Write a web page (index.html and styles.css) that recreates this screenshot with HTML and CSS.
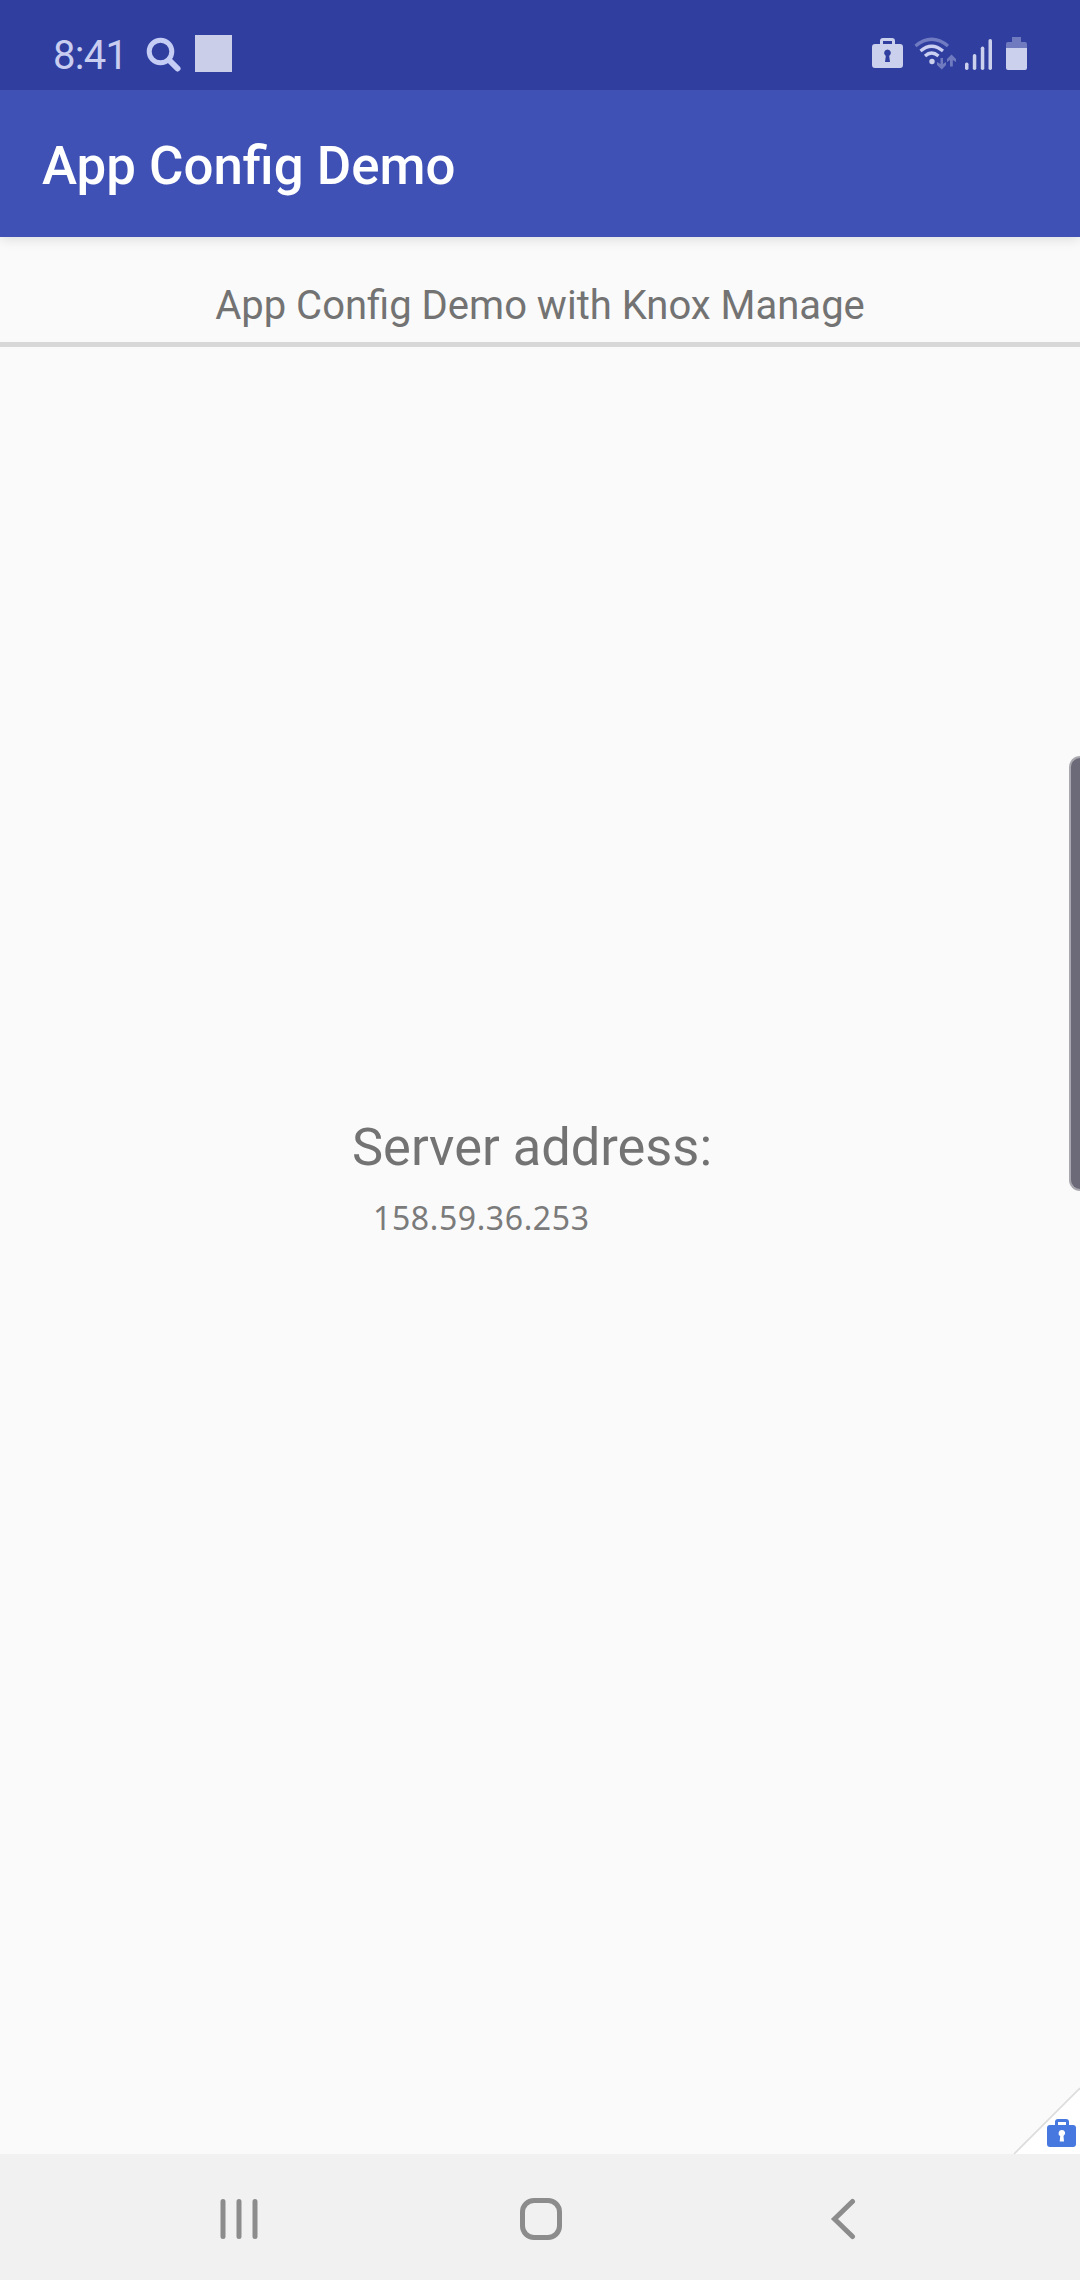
FILE: index.html
```html
<!DOCTYPE html>
<html lang="en">
<head>
<meta charset="utf-8">
<title>App Config Demo</title>
<link rel="stylesheet" href="styles.css">
</head>
<body>
<div class="screen">
  <header class="status-bar">
    <span class="clock">8:41</span>
    <svg class="search-icon" width="36" height="36" viewBox="0 0 36 36"><circle cx="14.5" cy="14.5" r="11.3"/><path class="handle" d="M23 23L31.500 31.500"/></svg>
    <span class="notification"></span>
    <div class="indicators">
      <svg class="work-icon" width="31" height="32" viewBox="0 0 31 32">
        <path fill-rule="evenodd" d="M8 7V4Q8 1 11 1H20Q23 1 23 4V7H28Q31 7 31 10V28Q31 31 28 31H3Q0 31 0 28V10Q0 7 3 7ZM11 7H20V4H11ZM15.500 12.500A3.500 3.500 0 0 0 13.800 19L13 25H18L17.200 19A3.500 3.500 0 0 0 15.500 12.500Z"/>
      </svg>
      <svg class="wifi-icon" width="43" height="34" viewBox="0 0 43 34">
        <g class="arcs"><path class="dim" d="M1.500 9Q17.500-4.500 34 9"/><path d="M6.500 14Q17.500 4.500 29 14"/><path d="M11 19Q17.500 13 24.500 19"/></g>
        <circle cx="18" cy="24.500" r="2.700"/>
        <path class="dim" d="M26.500 21H29V27L32 25V28L27.800 32.500L23 28V25L26.500 27Z"/>
        <path class="dim" d="M36 29.500H38.800V23L42 25V22L37.500 17.500L33 22V25L36 23Z"/>
      </svg>
      <svg class="signal-icon" width="27" height="32" viewBox="0 0 27 32">
        <rect y="23.500" width="3.500" height="7.500" rx="1.700"/><rect x="7.800" y="15" width="3.500" height="16" rx="1.700"/><rect x="15.800" y="7.500" width="3.500" height="23.500" rx="1.700"/><rect x="23.500" y="0" width="3.500" height="31" rx="1.700"/>
      </svg>
      <svg class="battery-icon" width="21" height="33" viewBox="0 0 21 33">
        <path class="dim" d="M6 0H15V5H19Q21 5 21 7V11H0V7Q0 5 2 5H6Z"/><path d="M0 11H21V31Q21 33 19 33H2Q0 33 0 31Z"/>
      </svg>
    </div>
  </header>
  <div class="app-bar"><h1 class="title">App Config Demo</h1></div>
  <div class="subtitle"><span class="subtitle-text">App Config Demo with Knox Manage</span></div>
  <main class="content">
    <div class="server-label">Server address:</div>
    <div class="server-value">158.59.36.253</div>
    <div class="edge-handle"></div>
    <svg class="work-corner" width="68" height="68" viewBox="0 0 68 68">
      <path class="fold" d="M3 68L68 3V68Z"/><path class="fold-edge" d="M2 68L68 2"/>
      <path class="case" fill-rule="evenodd" d="M43 39V36Q43 33 46 33H54Q57 33 57 36V39H61Q64 39 64 42V58Q64 61 61 61H38Q35 61 35 58V42Q35 39 38 39ZM46 39H54V36H46ZM49.800 44A3.200 3.200 0 0 0 48.200 50L47.700 55.500H52L51.500 50A3.200 3.200 0 0 0 49.800 44Z"/>
    </svg>
  </main>
  <nav class="nav-bar">
    <svg class="nav-icon" width="42" height="42" viewBox="0 0 42 42"><path d="M5 3.500V38.500M21 3.500V38.500M37 3.500V38.500"/></svg>
    <svg class="nav-icon" width="42" height="42" viewBox="0 0 42 42"><rect x="2.500" y="2.500" width="37" height="37" rx="11.500"/></svg>
    <svg class="nav-icon" width="42" height="42" viewBox="0 0 42 42"><path d="M30.500 3.500L12.500 21L30.500 38.500"/></svg>
  </nav>
</div>
</body>
</html>
```
FILE: styles.css
```css
* { box-sizing: border-box; }
body { margin: 0; font-family: Roboto, sans-serif; }
svg { display: block; flex: none; }
.screen {
  width: 1080px;
  height: 2280px;
  display: flex;
  flex-direction: column;
  background: #fafafa;
  overflow: hidden;
}
.status-bar {
  position: relative;
  z-index: 1;
  height: 90px;
  flex: none;
  display: flex;
  align-items: flex-start;
  padding: 35px 53px 0 53px;
  background: #303f9f;
  color: #c9cdf0;
}
.clock { width: 93px; padding-top: 1px; font-size: 40px; line-height: 40px; letter-spacing: -0.7px; }
.search-icon { margin-top: 2px; fill: none; stroke: #c5cdf5; stroke-width: 5; }
.handle { stroke-width: 6; stroke-linecap: round; }
.notification { width: 37px; height: 37px; margin-left: 13px; background: #cbcee8; }
.indicators { display: flex; margin-left: auto; padding-top: 2px; fill: #cbd0ec; }
.wifi-icon { margin-left: 11px; }
.signal-icon { margin: 2px 0 0 8px; }
.battery-icon { margin-left: 14px; }
.arcs { fill: none; stroke: #cbd0f2; stroke-width: 3.2; }
.dim { opacity: .42; }
.app-bar {
  height: 147px;
  flex: none;
  display: flex;
  align-items: center;
  padding: 5px 42px 0;
  background: #3f51b5;
  box-shadow: 0 2px 12px rgba(0, 0, 0, .13);
}
.title { margin: 0; font-size: 52.8px; font-weight: 500; line-height: 62px; color: #fff; }
.subtitle {
  height: 110px;
  flex: none;
  padding-top: 45px;
  border-bottom: 5px solid #d8d8d8;
  text-align: center;
}
.subtitle-text { font-size: 40px; line-height: 47px; color: #737373; }
.content { flex: 1; position: relative; padding: 769px 0 0 352px; }
.server-label { font-size: 52.4px; line-height: 62px; color: #737373; }
.server-value {
  margin: 18px 0 0 21px;
  font-family: "Noto Sans", sans-serif;
  font-size: 32px;
  line-height: 44px;
  letter-spacing: 0.6px;
  color: #7b7b7b;
}
.edge-handle {
  position: absolute;
  top: 409px;
  right: 0;
  width: 11px;
  height: 435px;
  border: 2px solid #a9a8ae;
  border-right: 0;
  border-radius: 11px 0 0 11px;
  background: #6c6978;
}
.work-corner { position: absolute; right: 0; bottom: 0; }
.fold { fill: #fff; }
.fold-edge { stroke: #dcdcdc; stroke-width: 1.6; }
.case { fill: #4678df; }
.nav-bar {
  height: 126px;
  flex: none;
  display: flex;
  align-items: center;
  justify-content: space-between;
  padding: 4px 216px 0 218px;
  background: #f1f1f1;
}
.nav-icon { fill: none; stroke: #8c8c8c; stroke-width: 5; stroke-linecap: round; }
```
